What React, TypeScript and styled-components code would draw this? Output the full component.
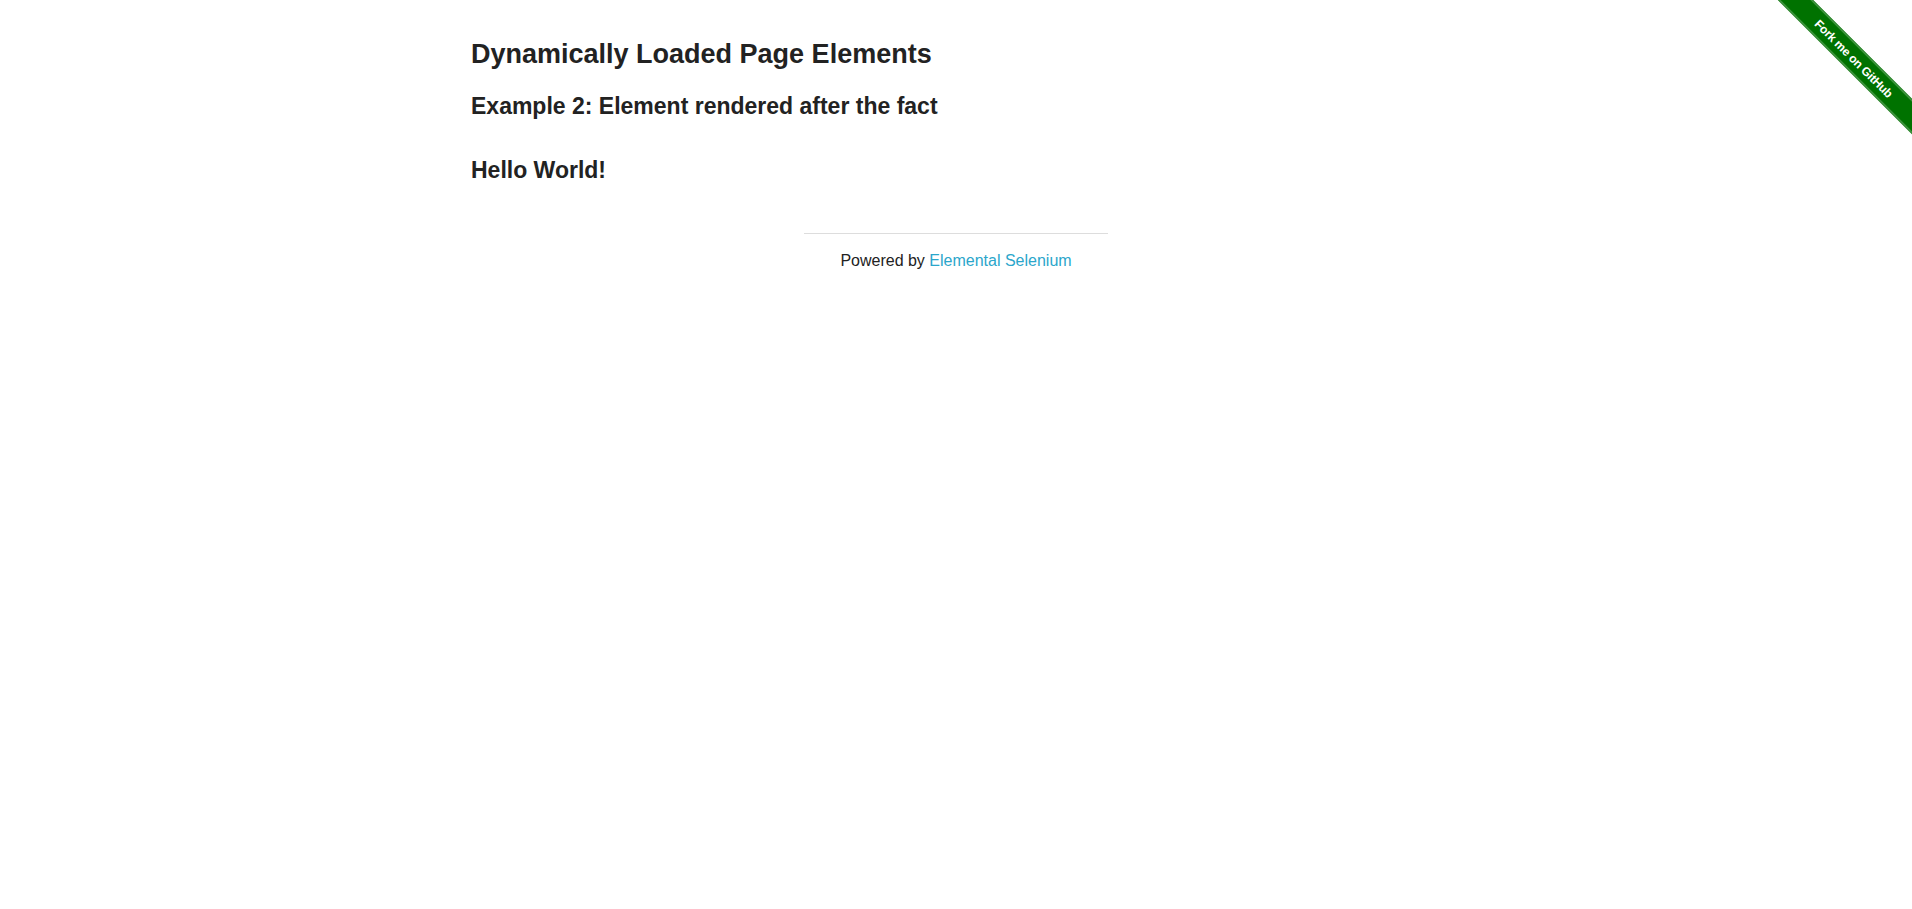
import React from 'react';
import styled, { createGlobalStyle } from 'styled-components';

const GlobalStyle = createGlobalStyle`
    html, body {
        margin: 0;
        padding: 0;
        background: #fff;
    }
    body {
        font-family: "Liberation Sans", Arial, Helvetica, sans-serif;
        color: #222;
        font-size: 16px;
        line-height: 1.5;
    }
`;

const Page = styled.div`
    position: relative;
    min-height: 909px;
`;

const Row = styled.div`
    max-width: 1000px;
    margin: 0 auto;
`;

const Column = styled.div<{ span?: number }>`
    width: ${props => ((props.span ?? 12) / 12) * 100}%;
    margin: 0 auto;
    padding: 0 15px;
    box-sizing: border-box;
`;

const Content = styled(Column)`
    padding-top: 36px;
`;

const Title = styled.h3`
    font-size: 27px;
    line-height: 1.4;
    font-weight: bold;
    margin: 0;
`;

const SubTitle = styled.h4<{ gap: number }>`
    font-size: 23px;
    line-height: 1.4;
    font-weight: bold;
    margin: ${props => props.gap}px 0 0;
`;

const Footer = styled(Row)`
    padding-top: 47px;
`;

const Rule = styled.hr`
    border: 0;
    border-top: 1px solid #ddd;
    margin: 0 0 15px;
    height: 0;
`;

const Powered = styled.div`
    text-align: center;
    line-height: 24px;
`;

const Link = styled.a`
    color: #2ba6cb;
    text-decoration: none;
`;

const RibbonBox = styled.a`
    position: absolute;
    top: 0;
    right: 0;
    width: 149px;
    height: 149px;
    overflow: hidden;
    text-decoration: none;
`;

const Ribbon = styled.span`
    position: absolute;
    left: -19px;
    top: 46px;
    width: 220px;
    height: 25px;
    transform: rotate(45deg);
    background: #007200;
    display: flex;
    align-items: center;
    justify-content: center;
    box-sizing: border-box;
    border-top: 1px solid #4f9a4f;
    border-bottom: 1px solid #4f9a4f;
    box-shadow: inset 0 1px 0 rgba(255, 255, 255, 0.25), inset 0 -1px 0 rgba(255, 255, 255, 0.25);
    color: #fff;
    font-family: "Liberation Sans", Arial, sans-serif;
    font-weight: bold;
    font-size: 12px;
    letter-spacing: -0.2px;
`;

const App: React.FC = () => {
    return (
        <Page>
            <GlobalStyle />
            <RibbonBox href="#">
                <Ribbon>Fork me on GitHub</Ribbon>
            </RibbonBox>
            <Row>
                <Content>
                    <Title>Dynamically Loaded Page Elements</Title>
                    <SubTitle gap={16}>Example 2: Element rendered after the fact</SubTitle>
                    <SubTitle gap={32}>Hello World!</SubTitle>
                </Content>
            </Row>
            <Footer>
                <Column span={4}>
                    <Rule />
                    <Powered>
                        Powered by <Link href="#">Elemental Selenium</Link>
                    </Powered>
                </Column>
            </Footer>
        </Page>
    );
};

export default App;
